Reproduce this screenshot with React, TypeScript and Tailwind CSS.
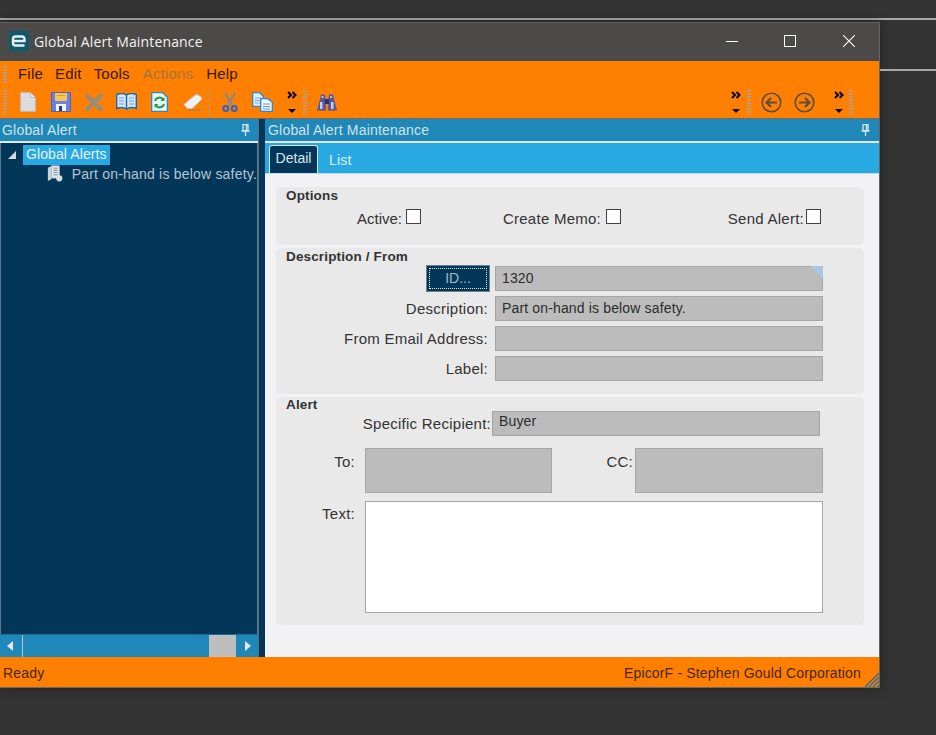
import React from 'react';

const Grip = ({ className = '' }: { className?: string }) => (
  <div className={`w-[4px] bg-[repeating-linear-gradient(to_bottom,#c39a70_0,#c39a70_2px,transparent_2px,transparent_3px)] ${className}`} />
);

const More = ({ className = '' }: { className?: string }) => (
  <div className={`flex w-[10px] flex-col items-center justify-between h-[22px] ${className}`}>
    <svg width="10" height="8" viewBox="0 0 10 8" fill="none" stroke="#000" strokeWidth="2">
      <path d="M1 1l3 3-3 3M5.500 1l3 3-3 3" />
    </svg>
    <svg width="8" height="4" viewBox="0 0 8 4"><path d="M0 0h8L4 4z" fill="#000" /></svg>
  </div>
);

const Slot = ({ children }: { children: React.ReactNode }) => (
  <div className="flex h-full w-[33px] items-center justify-center">{children}</div>
);

const NewIcon = () => (
  <svg width="16" height="20" viewBox="0 0 16 20">
    <path d="M.5.5h10l5 5v14H.5z" fill="#dcdcdc" stroke="#b9b9b9" />
    <path d="M10.500.5v5h5z" fill="#f3f3f3" stroke="#b9b9b9" />
  </svg>
);

const SaveIcon = () => (
  <svg width="20" height="20" viewBox="0 0 20 20">
    <path d="M.5.5h19v19H.5z" fill="#6a80e4" stroke="#4a60c4" />
    <rect x="4" y="1" width="12" height="8" fill="#f6c654" />
    <rect x="6" y="3" width="8" height="1" fill="#d99a2c" />
    <rect x="5" y="12" width="10" height="7" fill="#f4f4f4" />
    <rect x="8" y="14" width="3" height="5" fill="#333a66" />
  </svg>
);

const DeleteIcon = () => (
  <svg width="20" height="19" viewBox="0 0 20 19" fill="none" stroke="#968c7e" strokeWidth="4">
    <path d="M2 1.500l16 16M18 1.500l-16 16" />
  </svg>
);

const BookIcon = () => (
  <svg width="21" height="18" viewBox="0 0 21 18">
    <path d="M.7 1.500C4 .3 8 .3 10.500 2c2.500-1.700 6.500-1.700 9.800-.5v14c-3.300-1.200-7.300-1.200-9.800.5-2.500-1.700-6.500-1.700-9.800-.5z" fill="#d6e6f6" stroke="#1c66b4" strokeWidth="1.400" />
    <path d="M10.500 2v15" stroke="#1c66b4" strokeWidth="1.400" />
    <path d="M3 5h5M3 8h5M3 11h5M13 5h5M13 8h5M13 11h5" stroke="#6ea4da" />
  </svg>
);

const RefreshIcon = () => (
  <svg width="17" height="20" viewBox="0 0 17 20" fill="none">
    <path d="M.7.7h11l4.600 4.600v14H.7z" fill="#eef6fc" stroke="#2a8ad0" strokeWidth="1.300" />
    <path d="M4 9a4.500 4.500 0 0 1 8-1.500" stroke="#18a038" strokeWidth="2" />
    <path d="M13.500 5v4h-4z" fill="#18a038" />
    <path d="M13 12a4.500 4.500 0 0 1-8 1.500" stroke="#18a038" strokeWidth="2" />
    <path d="M3.500 16v-4h4z" fill="#18a038" />
  </svg>
);

const EraserIcon = () => (
  <svg width="20" height="17" viewBox="0 0 20 17">
    <path d="M1 10.500L11 2c1.500-1.300 3-1.500 4.500-.7l2.500 1.700c1 .8 1 2 0 3L9 14.500H4.500z" fill="#f2f2f2" stroke="#c4c4c4" />
    <path d="M5 16h13" stroke="#9c7a4a" strokeWidth="1" />
  </svg>
);

const CutIcon = () => (
  <svg width="16" height="20" viewBox="0 0 16 20" fill="none">
    <path d="M3 .5l6.500 13M13 .5L6.500 13.500" stroke="#8a8a8a" strokeWidth="2.300" />
    <circle cx="3.800" cy="16.500" r="2.500" stroke="#2f5fd0" strokeWidth="2" />
    <circle cx="12.200" cy="16.500" r="2.500" stroke="#2f5fd0" strokeWidth="2" />
  </svg>
);

const CopyIcon = () => (
  <svg width="21" height="20" viewBox="0 0 21 20">
    <path d="M.7.7h7l3.600 3.600v10H.7z" fill="#e2eefa" stroke="#2a86d6" strokeWidth="1.300" />
    <path d="M3 6h6M3 8.500h6M3 11h6" stroke="#7aaee0" />
    <path d="M8.700 6.700h7l4.600 3.600v9H8.700z" fill="#f2f8fd" stroke="#2a86d6" strokeWidth="1.300" />
    <path d="M11 12h7M11 14.500h7M11 17h7" stroke="#5b9ad8" />
  </svg>
);

const FindIcon = () => (
  <svg width="20" height="17" viewBox="0 0 20 17">
    <path d="M3 5l1-4.500h4L8.500 5l.5 11.500H0z" fill="#54569f" />
    <path d="M11.500 5l.5-4.500h4L17 5l3 11.500h-9z" fill="#54569f" />
    <rect x="8" y="5" width="4" height="5" fill="#2c2e6a" />
    <path d="M3 8h2.500v7H3zM14 8h2.500v7H14z" fill="#c8cbea" />
    <path d="M4.500 2h2v2h-2zM13 2h2v2h-2z" fill="#b4b8e2" />
  </svg>
);

const CircleArrow = ({ dir }: { dir: 'left' | 'right' }) => (
  <svg width="21" height="21" viewBox="0 0 21 21" fill="none" stroke="#5c4c3c">
    <circle cx="10.500" cy="10.500" r="9.300" strokeWidth="1.600" />
    <path d={dir === 'left' ? 'M16 10.500H6M10 6l-4.500 4.500L10 15' : 'M5 10.500h10M11 6l4.500 4.500L11 15'} strokeWidth="2.200" />
  </svg>
);

const Pin = () => (
  <svg width="9" height="12" viewBox="0 0 9 12" fill="none" stroke="#d6e6ee" strokeWidth="1.300">
    <path d="M2 .7h5v6H2zM.5 7h8M4.500 7v5" />
    <path d="M5.500 1v5" />
  </svg>
);

const AlertItemIcon = () => (
  <svg width="19" height="19" viewBox="0 0 19 19">
    <path d="M1 3l4-2v15l-4 2z" fill="#c9d3da" />
    <path d="M5 .7h9v14H5z" fill="#dfe6eb" stroke="#b5c1ca" />
    <path d="M7.500 3.500h4.500M7.500 6h4.500M7.500 8.500h4.500M7.500 11h4.500" stroke="#6f8595" />
    <circle cx="14" cy="15" r="3.500" fill="#d7dfe5" />
  </svg>
);

const Logo = () => (
  <svg width="20" height="20" viewBox="0 0 20 20" className="shrink-0">
    <rect width="20" height="20" fill="#0c5a6c" />
    <path d="M5 10h10.500V8c0-1.600-1-2.500-2.500-2.500H6.500C5 5.500 4 6.400 4 8v4c0 1.600 1 2.500 2.500 2.500h9" fill="none" stroke="#e8f0f2" strokeWidth="2.400" />
  </svg>
);

const Field = ({ width = 'w-[328px]', height = 'h-[25px]', text }: { width?: string; height?: string; text?: string }) => (
  <div className={`flex items-center border border-[#a5a5a5] bg-[#bcbcbc] pl-[6px] text-[14px] tracking-[0.15px] text-[#2c2c2c] ${width} ${height}`}>
    {text}
  </div>
);

const Label = ({ children, className = '' }: { children: React.ReactNode; className?: string }) => (
  <div className={`text-right text-[15px] leading-[25px] tracking-[0.25px] text-[#333] ${className}`}>{children}</div>
);

const Check = ({ className = '' }: { className?: string }) => (
  <div className={`h-[15px] w-[15px] border border-[#444] bg-white ${className}`} />
);

const GroupTitle = ({ children }: { children: React.ReactNode }) => (
  <div className="pl-[10px] text-[13.5px] font-bold leading-[14px] tracking-[0.15px] text-[#333]">{children}</div>
);

const DescRow = ({ label, text }: { label: string; text?: string }) => (
  <div className="flex h-[25px] items-center">
    <Label className="w-[212px]">{label}</Label>
    <div className="ml-[7px]">
      <Field text={text} />
    </div>
  </div>
);

export default function App() {
  return (
    <div className="h-[735px] w-[936px] overflow-hidden bg-[#333333] font-['Liberation_Sans',Arial,sans-serif]">
      <div className="h-[18px]" />
      <div className="h-[2px] bg-[#a8a8a8]" />
      <div className="h-[2px]" />
      <div className="flex">
        <div className="flex h-[666px] w-[880px] shrink-0 flex-col border-r border-t border-[#636363] shadow-[0_0_10px_rgba(0,0,0,0.35)]">
          {/* title bar */}
          <div className="flex h-[38px] items-center bg-[#4b4a48] pb-[2px] pl-[9px]">
            <Logo />
            <span className="ml-[5px] font-['Open_Sans',sans-serif] text-[14px] tracking-[0.15px] text-[#f2f2f2]">Global Alert Maintenance</span>
            <div className="ml-auto flex items-center pr-[24px]">
              <div className="h-px w-[12px] bg-white" />
              <div className="ml-[46px] h-[12px] w-[12px] border border-white" />
              <svg width="12" height="12" viewBox="0 0 12 12" stroke="#fff" strokeWidth="1.100" className="ml-[47px]">
                <path d="M0 0l12 12M12 0L0 12" />
              </svg>
            </div>
          </div>

          {/* menu + toolbar */}
          <div className="h-[58px] border-b border-[#6e6a62] bg-[#ff8000]">
            <div className="flex h-[26px] items-center pl-[3px] text-[15px] tracking-[0.2px] text-[#331a00]">
              <Grip className="h-[17px]" />
              <span className="ml-[11px]">File</span>
              <span className="ml-[12px]">Edit</span>
              <span className="ml-[12px]">Tools</span>
              <span className="ml-[13px] text-[#a5743f]">Actions</span>
              <span className="ml-[13px]">Help</span>
            </div>
            <div className="flex h-[30px] items-center pl-[3px]">
              <Grip className="h-[25px]" />
              <div className="ml-[4px] flex h-full">
                <Slot><NewIcon /></Slot>
                <Slot><SaveIcon /></Slot>
                <Slot><DeleteIcon /></Slot>
                <Slot><BookIcon /></Slot>
                <Slot><RefreshIcon /></Slot>
                <Slot><EraserIcon /></Slot>
              </div>
              <div className="h-[29px] w-px bg-[#c8955e]" />
              <div className="ml-[3px] flex h-full">
                <Slot><CutIcon /></Slot>
                <Slot><CopyIcon /></Slot>
              </div>
              <More className="ml-[8px]" />
              <Grip className="ml-[6px] h-[25px]" />
              <div className="ml-[10px]"><FindIcon /></div>
              <div className="ml-auto flex h-full items-center pr-[26px]">
                <More />
                <Grip className="ml-[6px] h-[25px]" />
                <div className="ml-[10px]"><CircleArrow dir="left" /></div>
                <div className="ml-[12px]"><CircleArrow dir="right" /></div>
                <More className="ml-[19px]" />
                <Grip className="ml-[5px] h-[25px]" />
              </div>
            </div>
          </div>

          {/* panes */}
          <div className="flex min-h-0 flex-1">
            {/* tree pane */}
            <div className="flex w-[258px] shrink-0 flex-col">
              <div className="flex h-[22px] items-center justify-between bg-[#2088b8] pl-[2px] pr-[8px] text-[14px] tracking-[0.2px] text-[#cfe3ec]">
                <span>Global Alert</span>
                <Pin />
              </div>
              <div className="h-[2px] bg-[#e4e8ec]" />
              <div className="min-h-0 flex-1 overflow-hidden border-l border-r border-[#5b7a8e] bg-[#02375a]">
                <div className="flex h-[21px] items-center pt-[2px]">
                  <svg width="8" height="8" viewBox="0 0 8 8" className="ml-[7px]"><path d="M8 0v8H0z" fill="#d8d8d8" /></svg>
                  <span className="ml-[7px] flex h-[20px] items-center bg-[#29a9e1] px-[3px] text-[14px] tracking-[0.1px] text-[#e6f2f8]">Global Alerts</span>
                </div>
                <div className="flex h-[19px] items-center whitespace-nowrap pl-[46px]">
                  <AlertItemIcon />
                  <span className="ml-[8px] pt-[2px] text-[14px] tracking-[0.2px] text-[#b4c5d1]">Part on-hand is below safety.</span>
                </div>
              </div>
              <div className="flex h-[23px] items-center border-t border-[#1a6c94] bg-[#2088b8]">
                <svg width="6" height="10" viewBox="0 0 6 10" className="ml-[7px]"><path d="M6 0v10L0 5z" fill="#e2e8ec" /></svg>
                <div className="ml-[9px] h-full w-px bg-[#b8c4ca]" />
                <div className="ml-[186px] h-full w-[27px] bg-[#bebebe]" />
                <svg width="6" height="10" viewBox="0 0 6 10" className="ml-[9px]"><path d="M0 0v10l6-5z" fill="#e2e8ec" /></svg>
              </div>
            </div>

            {/* splitter */}
            <div className="w-[7px] shrink-0 border-l border-[#5b6a74] bg-[#02375a]" />

            {/* detail pane */}
            <div className="flex min-w-0 flex-1 flex-col">
              <div className="flex h-[22px] items-center justify-between bg-[#2088b8] pl-[3px] pr-[9px] text-[14px] tracking-[0.2px] text-[#cfe3ec]">
                <span>Global Alert Maintenance</span>
                <Pin />
              </div>
              <div className="h-[2px] bg-[#e4e8ec]" />
              <div className="flex h-[31px] items-end border-b border-[#bcdcec] bg-[#29a9e1] pl-[4px]">
                <div className="flex h-[28px] w-[49px] items-center justify-center rounded-t-[3px] border border-b-0 border-[#d6e6ee] bg-[#02375a] pb-[2px] text-[14px] text-[#dbe6ec]">Detail</div>
                <div className="ml-[11px] pb-[2px] text-[14px] tracking-[0.2px] text-[#dff1fa]">List</div>
              </div>
              <div className="flex min-h-0 flex-1 flex-col bg-[#f2f2f4] px-[11px] pb-[32px] pr-[15px] pt-[13px]">
                <div className="h-[58px] shrink-0 rounded-[5px] bg-[#e9e9e9] pt-[2px]">
                  <GroupTitle>Options</GroupTitle>
                  <div className="mt-[6px] flex items-start text-[15px] leading-[20px] tracking-[0.25px] text-[#333]">
                    <div className="w-[126px] text-right tracking-normal">Active:</div>
                    <Check className="ml-[4px]" />
                    <div className="w-[180px] text-right">Create Memo:</div>
                    <Check className="ml-[5px]" />
                    <div className="w-[183px] text-right">Send Alert:</div>
                    <Check className="ml-[2px]" />
                  </div>
                </div>

                <div className="mt-[3px] h-[146px] shrink-0 rounded-[5px] bg-[#e9e9e9] pt-[2px]">
                  <GroupTitle>Description / From</GroupTitle>
                  <div className="mt-[2px] flex h-[25px] items-center">
                    <div className="ml-[150px] flex h-[27px] w-[64px] items-center justify-center border border-[#6d7f8c] bg-[#02375a] p-[2px] text-[14px] text-[#a3b7c5]">
                      <div className="flex h-full w-full items-center justify-center border border-dotted border-[#e8eef2]">ID...</div>
                    </div>
                    <div className="relative ml-[5px]">
                      <Field text="1320" />
                      <svg width="12" height="12" viewBox="0 0 12 12" className="absolute right-0 top-0"><path d="M0 0h12v12z" fill="#a9c6e6" /></svg>
                    </div>
                  </div>
                  <div className="mt-[5px] flex flex-col gap-[5px]">
                    <DescRow label="Description:" text="Part on-hand is below safety." />
                    <DescRow label="From Email Address:" />
                    <DescRow label="Label:" />
                  </div>
                </div>

                <div className="mt-[3px] min-h-0 flex-1 rounded-[5px] bg-[#e9e9e9] pt-px">
                  <GroupTitle>Alert</GroupTitle>
                  <div className="-mt-[1px] flex h-[25px] items-center">
                    <Label className="w-[215px]">Specific Recipient:</Label>
                    <div className="ml-px">
                      <div className="flex h-[25px] w-[328px] items-start border border-[#a5a5a5] bg-[#bcbcbc] pl-[6px] text-[14px] leading-[19px] tracking-[0.15px] text-[#2c2c2c]">Buyer</div>
                    </div>
                  </div>
                  <div className="mt-[12px] flex">
                    <Label className="w-[79px] pt-px">To:</Label>
                    <div className="ml-[10px]"><Field width="w-[187px]" height="h-[45px]" /></div>
                    <Label className="w-[81px] pt-px">CC:</Label>
                    <div className="ml-[2px]"><Field width="w-[188px]" height="h-[45px]" /></div>
                  </div>
                  <div className="mt-[8px] flex">
                    <Label className="w-[79px]">Text:</Label>
                    <div className="ml-[10px] h-[112px] w-[458px] border border-[#a5a5a5] bg-white" />
                  </div>
                </div>
              </div>
            </div>
          </div>

          {/* status bar */}
          <div className="relative flex h-[31px] shrink-0 items-center justify-between border-b border-[#6e6a62] bg-[#ff8000] pl-[3px] pr-[18px] pt-[3px] text-[14px] tracking-[0.17px] text-[#4a2600]">
            <span>Ready</span>
            <span>EpicorF - Stephen Gould Corporation</span>
            <svg width="14" height="14" viewBox="0 0 14 14" className="absolute bottom-0 right-0" stroke="#2f6f8f" strokeWidth="1.500">
              <path d="M0 14L14 0M4 14L14 4M8 14l6-6M12 14l2-2" />
            </svg>
          </div>
        </div>
        <div className="flex-1 pt-[47px]">
          <div className="h-[2px] bg-[#a8a8a8]" />
        </div>
      </div>
    </div>
  );
}
